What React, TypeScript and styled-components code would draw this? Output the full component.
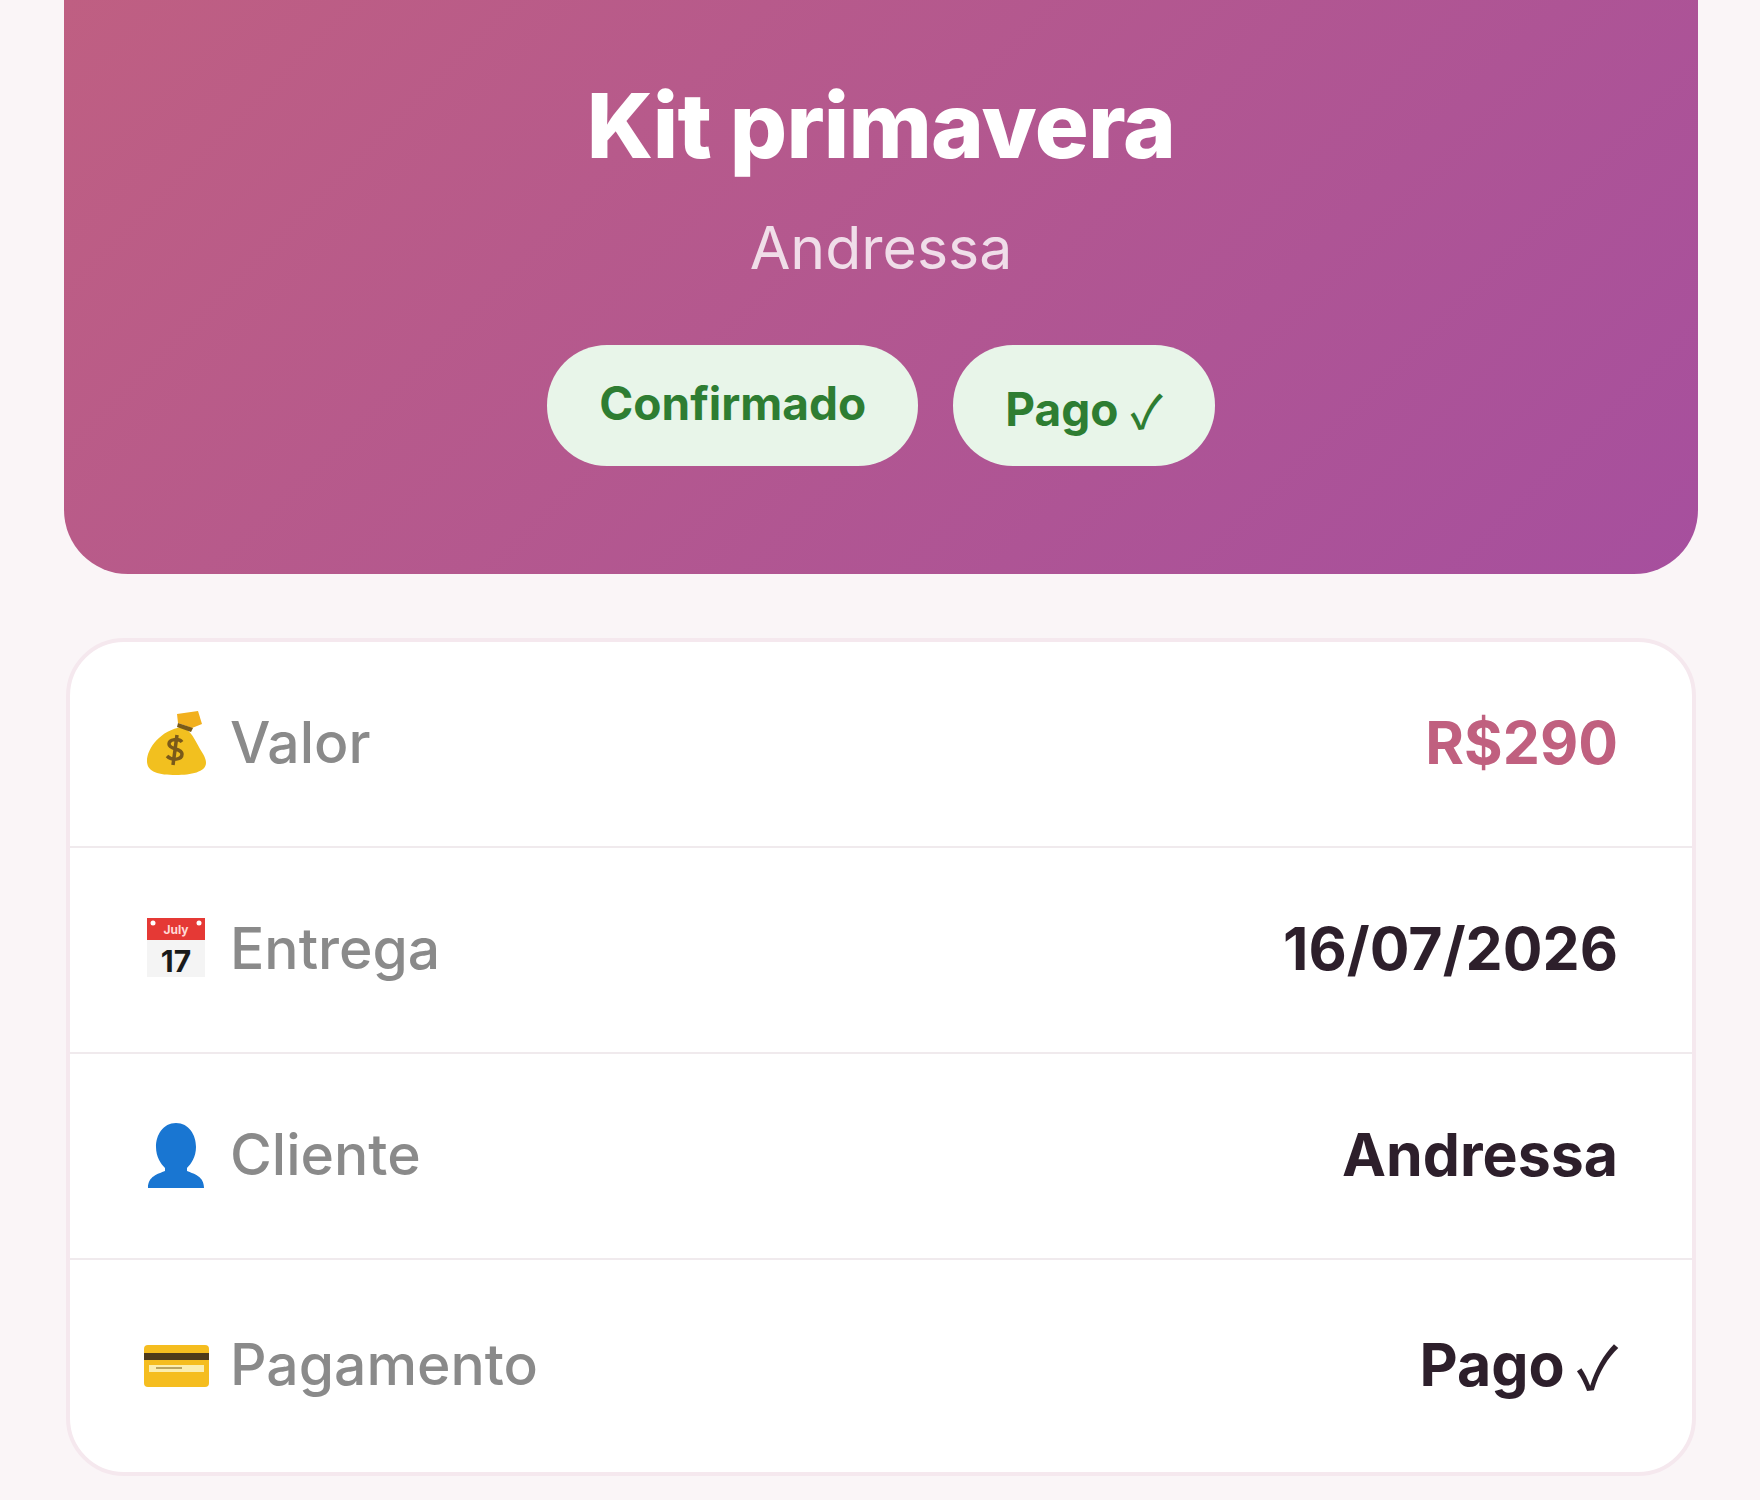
import React from "react"
import styled, { createGlobalStyle } from "styled-components"

const GlobalStyle = createGlobalStyle`
  html, body {
    margin: 0;
    padding: 0;
    background: #faf5f7;
    overflow: hidden;
  }
  * {
    box-sizing: border-box;
  }
`

const StyledPage = styled.div`
  display: flex;
  flex-direction: column;
  width: 1760px;
  height: 1500px;
  padding: 0 62px 0 64px;
  font-family: "Inter", "DejaVu Sans", sans-serif;
  background: #faf5f7;
`

const StyledHero = styled.header`
  display: flex;
  flex-direction: column;
  align-items: center;
  height: 574px;
  padding-top: 72px;
  border-radius: 0 0 64px 64px;
  background: linear-gradient(135deg, #bf5f82 0%, #a64f9e 100%);
`

const StyledTitle = styled.h1`
  margin: 0;
  font-size: 90px;
  line-height: 108px;
  font-weight: 800;
  letter-spacing: -0.8px;
  color: #ffffff;
`

const StyledSubtitle = styled.div`
  margin-top: 32px;
  font-size: 59px;
  line-height: 72px;
  font-weight: 400;
  color: rgba(255, 255, 255, 0.8);
`

const StyledBadges = styled.div`
  display: flex;
  gap: 35px;
  margin-top: 61px;
`

const StyledBadge = styled.span<{ $checked?: boolean }>`
  display: flex;
  align-items: center;
  justify-content: center;
  gap: 12px;
  height: 121px;
  padding: ${({ $checked }) => ($checked ? "6px 52px 0" : "0 52px 6px")};
  border-radius: 60px;
  font-size: 46px;
  font-weight: 700;
  color: #2e7d32;
  background: #e8f5e9;
`

const StyledCheck = styled.span`
  font-family: "Noto Sans CJK JP", sans-serif;
  font-weight: 500;
`

const StyledCard = styled.section`
  display: flex;
  flex-direction: column;
  margin: 64px 2px 0;
  height: 838px;
  border: 4px solid #f5e8ee;
  border-radius: 58px;
  background: #ffffff;
`

const StyledRow = styled.div<{ $last?: boolean }>`
  display: flex;
  align-items: center;
  justify-content: space-between;
  flex: ${({ $last }) => ($last ? "1" : "none")};
  height: ${({ $last }) => ($last ? "auto" : "206px")};
  padding: 0 74px;
  border-bottom: ${({ $last }) => ($last ? "none" : "2px solid #f0eaed")};
`

const StyledLabel = styled.div`
  display: flex;
  align-items: center;
  gap: 22px;
  font-size: 57px;
  font-weight: 500;
  color: #8a8a8a;
`

const StyledLabelText = styled.span`
  padding-bottom: 3px;
`

const StyledIcon = styled.svg`
  flex: none;
  width: 64px;
  height: 68px;
  overflow: visible;
`

const StyledValue = styled.div<{ $accent?: boolean }>`
  display: flex;
  align-items: center;
  gap: 12px;
  padding-bottom: 3px;
  font-size: 59px;
  font-weight: 700;
  color: ${({ $accent }) => ($accent ? "#c0607f" : "#2d1f2b")};
`

const MoneyBagIcon = () => (
  <StyledIcon viewBox="0 0 64 68">
    <path d="M33 4 L54 1 L58 14 L48 18 L34 13 Z" fill="#f2b01e" />
    <path
      d="M38 17 C47 20 51 30 56 39 C60 45 62 49 62 53 C62 62 47 65 32 65 C14 65 3 62 3 51 C3 38 17 20 38 17 Z"
      fill="#f2c01f"
    />
    <path d="M34 13 L49 18 L47 22 L33 17 Z" fill="#7a5a1a" />
    <path
      d="M38 32 C35 28 25 29 25 34 C25 40 38 38 38 44 C38 50 28 51 23 46 M33 25 L29 55"
      fill="none"
      stroke="#7a5a1a"
      strokeWidth="3.5"
    />
  </StyledIcon>
)

const CalendarIcon = () => (
  <StyledIcon viewBox="0 0 64 68">
    <rect x="3" y="2" width="58" height="59" fill="#f4f4f4" />
    <rect x="3" y="2" width="58" height="22" fill="#e53935" />
    <circle cx="9" cy="7" r="2.5" fill="#ffffff" />
    <circle cx="55" cy="7" r="2.5" fill="#ffffff" />
    <text x="32" y="18" textAnchor="middle" fontSize="12" fontWeight="700" fill="#ffd9d6" fontFamily="Inter, sans-serif">
      July
    </text>
    <text x="32" y="56" textAnchor="middle" fontSize="30" fontWeight="700" fill="#1a1a1a" fontFamily="Inter, sans-serif">
      17
    </text>
  </StyledIcon>
)

const BustIcon = () => (
  <StyledIcon viewBox="0 0 64 68">
    <path
      d="M32 1 C45 1 52 13 52 25 C52 35 47 42 43 46 L43 49 C50 52 60 54 60 66 L4 66 C4 54 14 52 21 49 L21 46 C17 42 12 35 12 25 C12 13 19 1 32 1 Z"
      fill="#1976d2"
    />
  </StyledIcon>
)

const CreditCardIcon = () => (
  <StyledIcon viewBox="0 0 64 68">
    <rect x="0" y="13" width="65" height="42" rx="4" fill="#f5bd1f" />
    <rect x="0" y="21" width="65" height="7" fill="#4e3a1a" />
    <rect x="5" y="33" width="55" height="7" fill="#fbeeb0" />
    <rect x="12" y="35" width="26" height="2" fill="#b9a460" />
  </StyledIcon>
)

const rows = [
  { label: "Valor", value: "R$290", icon: <MoneyBagIcon />, accent: true },
  { label: "Entrega", value: "16/07/2026", icon: <CalendarIcon /> },
  { label: "Cliente", value: "Andressa", icon: <BustIcon /> },
  { label: "Pagamento", value: "Pago", icon: <CreditCardIcon />, paid: true },
]

const App: React.FC = () => {
  return (
    <StyledPage>
      <GlobalStyle />
      <StyledHero>
        <StyledTitle>Kit primavera</StyledTitle>
        <StyledSubtitle>Andressa</StyledSubtitle>
        <StyledBadges>
          <StyledBadge>Confirmado</StyledBadge>
          <StyledBadge $checked>
            Pago
            <StyledCheck>✓</StyledCheck>
          </StyledBadge>
        </StyledBadges>
      </StyledHero>
      <StyledCard>
        {rows.map((row, index) => (
          <StyledRow key={row.label} $last={index === rows.length - 1}>
            <StyledLabel>
              {row.icon}
              <StyledLabelText>{row.label}</StyledLabelText>
            </StyledLabel>
            <StyledValue $accent={row.accent}>
              {row.value}
              {row.paid && <StyledCheck>✓</StyledCheck>}
            </StyledValue>
          </StyledRow>
        ))}
      </StyledCard>
    </StyledPage>
  )
}

export default App
